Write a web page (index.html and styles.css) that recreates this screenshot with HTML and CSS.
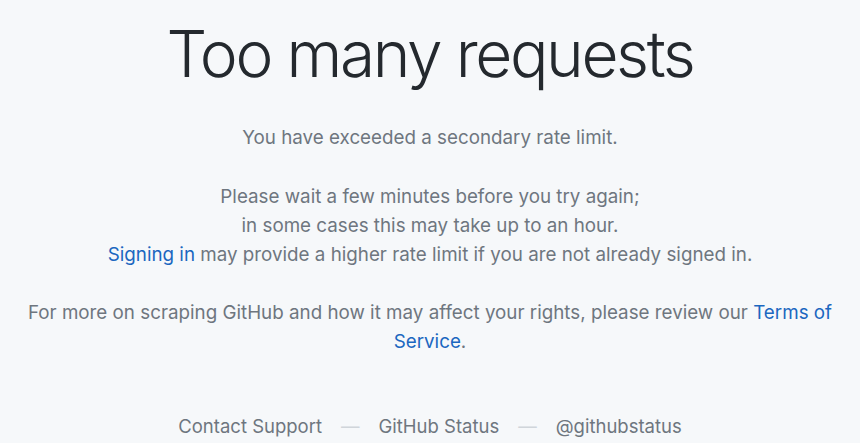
FILE: index.html
```html
<!DOCTYPE html>
<html lang="en">
<head>
<meta charset="utf-8">
<title>Too many requests</title>
<link rel="stylesheet" href="styles.css">
</head>
<body>
<main class="page">
  <h1 class="title">Too many requests</h1>
  <p class="msg">You have exceeded a secondary rate limit.</p>
  <p class="msg msg-gap">Please wait a few minutes before you try again;<br>in some cases this may take up to an hour.<br><a class="link" href="#">Signing in</a> may provide a higher rate limit if you are not already signed in.</p>
  <p class="msg">For more on scraping GitHub and how it may affect your rights, please review our <a class="link" href="#">Terms of Service</a>.</p>
  <nav class="footer">
    <a href="#">Contact Support</a>
    <span class="sep">—</span>
    <a href="#">GitHub Status</a>
    <span class="sep">—</span>
    <a href="#">@githubstatus</a>
  </nav>
</main>
</body>
</html>
```
FILE: styles.css
```css
html, body {
  margin: 0;
  padding: 0;
  background: #f6f8fa;
}
body {
  font-family: Inter, "Liberation Sans", Arial, sans-serif;
  color: #6e767f;
}
.page {
  display: flex;
  flex-direction: column;
  align-items: center;
  text-align: center;
  padding: 0 16px;
}
.title {
  margin: 14px 0 0;
  font-size: 64px;
  font-weight: 300;
  line-height: 80px;
  color: #24292e;
  letter-spacing: -2.4px;
}
.msg {
  margin: 29px 0 0;
  font-size: 18.8px;
  line-height: 29px;
}
.msg-gap {
  margin-top: 30px;
}
.link {
  color: #1b67c0;
  text-decoration: none;
}
.footer {
  margin-top: 56px;
  display: flex;
  gap: 19px;
  font-size: 18.5px;
  line-height: 29px;
}
.footer a {
  color: #6e767f;
  text-decoration: none;
}
.sep {
  color: #d0d5da;
}
```
